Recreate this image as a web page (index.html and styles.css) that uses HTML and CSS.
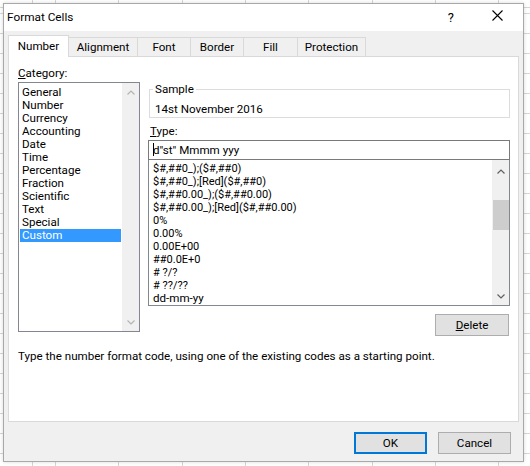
FILE: index.html
```html
<!DOCTYPE html>
<html>
<head>
<meta charset="utf-8">
<link rel="stylesheet" href="styles.css">
</head>
<body>
<div class="dialog">
  <div class="titlebar">
    <span class="title">Format Cells</span>
    <span class="help">?</span>
    <svg class="close" width="11" height="11" viewBox="0 0 11 11"><path d="M0.5 0.5 L10.5 10.5 M10.5 0.5 L0.5 10.5" stroke="#000" stroke-width="1.1" fill="none"/></svg>
  </div>
  <div class="body">
    <div class="tabs">
      <div class="tab sel w-number">Number</div>
      <div class="tab w-align">Alignment</div>
      <div class="tab w-font">Font</div>
      <div class="tab w-border">Border</div>
      <div class="tab w-fill">Fill</div>
      <div class="tab w-prot">Protection</div>
    </div>
    <div class="panel">
      <div class="main">
        <div class="leftcol">
          <div class="label"><u>C</u>ategory:</div>
          <div class="catlist">
            <div class="items">
              <div class="item">General</div>
              <div class="item">Number</div>
              <div class="item">Currency</div>
              <div class="item">Accounting</div>
              <div class="item">Date</div>
              <div class="item">Time</div>
              <div class="item">Percentage</div>
              <div class="item">Fraction</div>
              <div class="item">Scientific</div>
              <div class="item">Text</div>
              <div class="item">Special</div>
              <div class="item active">Custom</div>
            </div>
            <div class="sbar">
              <svg class="arrow" width="8" height="5" viewBox="0 0 8 5"><path d="M0.5 4.5 L4 1 L7.5 4.5" stroke="#b4b4b4" stroke-width="1.2" fill="none"/></svg>
              <svg class="arrow" width="8" height="5" viewBox="0 0 8 5"><path d="M0.5 0.5 L4 4 L7.5 0.5" stroke="#b4b4b4" stroke-width="1.2" fill="none"/></svg>
            </div>
          </div>
        </div>
        <div class="rightcol">
          <fieldset class="sample">
            <legend>Sample</legend>
            <div class="sampletext">14st November 2016</div>
          </fieldset>
          <div class="label typelabel"><u>T</u>ype:</div>
          <div class="typeinput"><span class="caret"></span>d"st" Mmmm yyy</div>
          <div class="fmtlist">
            <div class="items fmtitems">
              <div class="fitem small">$#,##0_);($#,##0)</div>
              <div class="fitem small">$#,##0_);[Red]($#,##0)</div>
              <div class="fitem small">$#,##0.00_);($#,##0.00)</div>
              <div class="fitem small">$#,##0.00_);[Red]($#,##0.00)</div>
              <div class="fitem small">0%</div>
              <div class="fitem small">0.00%</div>
              <div class="fitem small">0.00E+00</div>
              <div class="fitem small">##0.0E+0</div>
              <div class="fitem small"># ?/?</div>
              <div class="fitem small"># ??/??</div>
              <div class="fitem">dd-mm-yy</div>
            </div>
            <div class="sbar sbar2">
              <svg class="arrow" width="8" height="5" viewBox="0 0 8 5"><path d="M0.5 4.5 L4 1 L7.5 4.5" stroke="#606060" stroke-width="1.2" fill="none"/></svg>
              <div class="thumb"></div>
              <svg class="arrow" width="8" height="5" viewBox="0 0 8 5"><path d="M0.5 0.5 L4 4 L7.5 0.5" stroke="#606060" stroke-width="1.2" fill="none"/></svg>
            </div>
          </div>
          <div class="btn delete"><u>D</u>elete</div>
        </div>
      </div>
      <div class="desc">Type the number format code, using one of the existing codes as a starting point.</div>
    </div>
    <div class="buttons">
      <div class="btn ok">OK</div>
      <div class="btn cancel">Cancel</div>
    </div>
  </div>
</div>
</body>
</html>
```
FILE: styles.css
```css
html, body {
  margin: 0;
  padding: 0;
}
body {
  width: 530px;
  height: 466px;
  overflow: hidden;
  background-color: #ffffff;
  background-image:
    repeating-linear-gradient(to right, #d6d6d6 0, #d6d6d6 1px, transparent 1px, transparent 63.33px),
    repeating-linear-gradient(to bottom, #d6d6d6 0, #d6d6d6 1px, transparent 1px, transparent 20px);
  background-position: 55px 0, 0 13px;
  font-family: Roboto, "Noto Sans", sans-serif;
  font-size: 11.6px;
  color: #000;
}
.dialog {
  box-sizing: border-box;
  width: 521px;
  height: 459px;
  margin: 3px 0 0 3px;
  border: 1px solid #a8a8a8;
  background: #f0f0f0;
  display: flex;
  flex-direction: column;
  box-shadow: 0 0 4px rgba(0,0,0,0.15);
}
.titlebar {
  height: 27px;
  background: #fff;
  display: flex;
  align-items: center;
  padding-left: 3px;
  flex-shrink: 0;
}
.title {
  flex: 1;
  line-height: 15px;
  margin-top: -1px;
  font-size: 11.8px;
}
.help {
  font-size: 13px;
  margin-right: 38px;
  margin-top: -1px;
}
.close {
  margin-right: 20px;
  margin-top: -4px;
}
.body {
  padding: 4px 4px 0 4px;
  display: flex;
  flex-direction: column;
}
.tabs {
  display: flex;
  align-items: flex-end;
  height: 21px;
}
.tab {
  box-sizing: border-box;
  height: 19px;
  border: 1px solid #d9d9d9;
  border-bottom: none;
  margin-left: -1px;
  background: #f0f0f0;
  text-align: center;
  line-height: 19px;
  position: relative;
}
.tab:first-child { margin-left: 0; }
.tab.sel {
  height: 22px;
  margin-bottom: -1px;
  background: #fff;
  z-index: 2;
  line-height: 21px;
}
.w-number { width: 61px; }
.w-align { width: 70px; }
.w-font { width: 54px; }
.w-border { width: 54px; }
.w-fill { width: 55px; }
.w-prot { width: 69px; }
.panel {
  box-sizing: border-box;
  width: 511px;
  height: 366px;
  border: 1px solid #d9d9d9;
  background: #fff;
  padding: 9px 8px 0 9px;
  position: relative;
  z-index: 1;
}
.main {
  display: grid;
  grid-template-columns: 121px 362px;
  column-gap: 9px;
  align-items: start;
}
.label {
  line-height: 15px;
  height: 15px;
}
.catlist {
  box-sizing: border-box;
  width: 122px;
  height: 250px;
  margin-top: 1px;
  border: 1px solid #828790;
  display: flex;
}
.items {
  flex: 1;
  padding-top: 3px;
}
.item {
  line-height: 13px;
  height: 13px;
  padding-left: 2px;
  margin: 0 1px;
  white-space: nowrap;
}
.item.active {
  background: #3399ff;
  color: #fff;
}
.sbar {
  width: 17px;
  background: #f0f0f0;
  display: flex;
  flex-direction: column;
  align-items: center;
  justify-content: space-between;
  padding: 7px 0 6px;
  box-sizing: border-box;
}
.sbar2 {
  padding: 9px 0 6px;
  justify-content: flex-start;
}
.sbar2 .thumb {
  width: 16px;
  height: 30px;
  background: #cdcdcd;
  margin-top: 26px;
  margin-bottom: auto;
}
.sample {
  margin: 16px 0 0 1px;
  padding: 0 0 0 3px;
  border: 1px solid #dcdcdc;
  min-width: 0;
}
.sample legend {
  padding: 0 2px;
  line-height: 15px;
}
.sampletext {
  line-height: 15px;
  margin-top: 5px;
  padding-left: 2px;
  height: 15px;
}
.typelabel {
  margin-top: 6px;
  margin-left: 2px;
}
.typeinput {
  box-sizing: border-box;
  height: 20px;
  margin-top: 1px;
  border: 1px solid #7a7a7a;
  padding-left: 4px;
  line-height: 18px;
  position: relative;
}
.caret {
  display: inline-block;
  width: 1px;
  height: 13px;
  background: #000;
  vertical-align: -2px;
  margin-right: -1px;
}
.fmtlist {
  box-sizing: border-box;
  height: 146px;
  border: 1px solid #828790;
  border-top: none;
  display: flex;
}
.fmtitems {
  padding-top: 2px;
}
.fitem {
  line-height: 13px;
  height: 13px;
  padding-left: 4px;
  white-space: nowrap;
}
.fitem.small {
  font-size: 11px;
  letter-spacing: 0;
}
.btn {
  box-sizing: border-box;
  height: 22px;
  width: 73px;
  border: 1px solid #adadad;
  background: #e1e1e1;
  text-align: center;
  line-height: 20px;
}
.delete {
  width: 74px;
  margin: 8px 1px 0 auto;
}
.rightcol {
  display: flex;
  flex-direction: column;
}
.desc {
  margin-top: 13px;
  line-height: 15px;
}
.buttons {
  display: flex;
  justify-content: flex-end;
  gap: 11px;
  margin-top: 10px;
  padding-right: 8px;
}
.ok {
  border: 2px solid #0078d7;
  line-height: 18px;
}
```
